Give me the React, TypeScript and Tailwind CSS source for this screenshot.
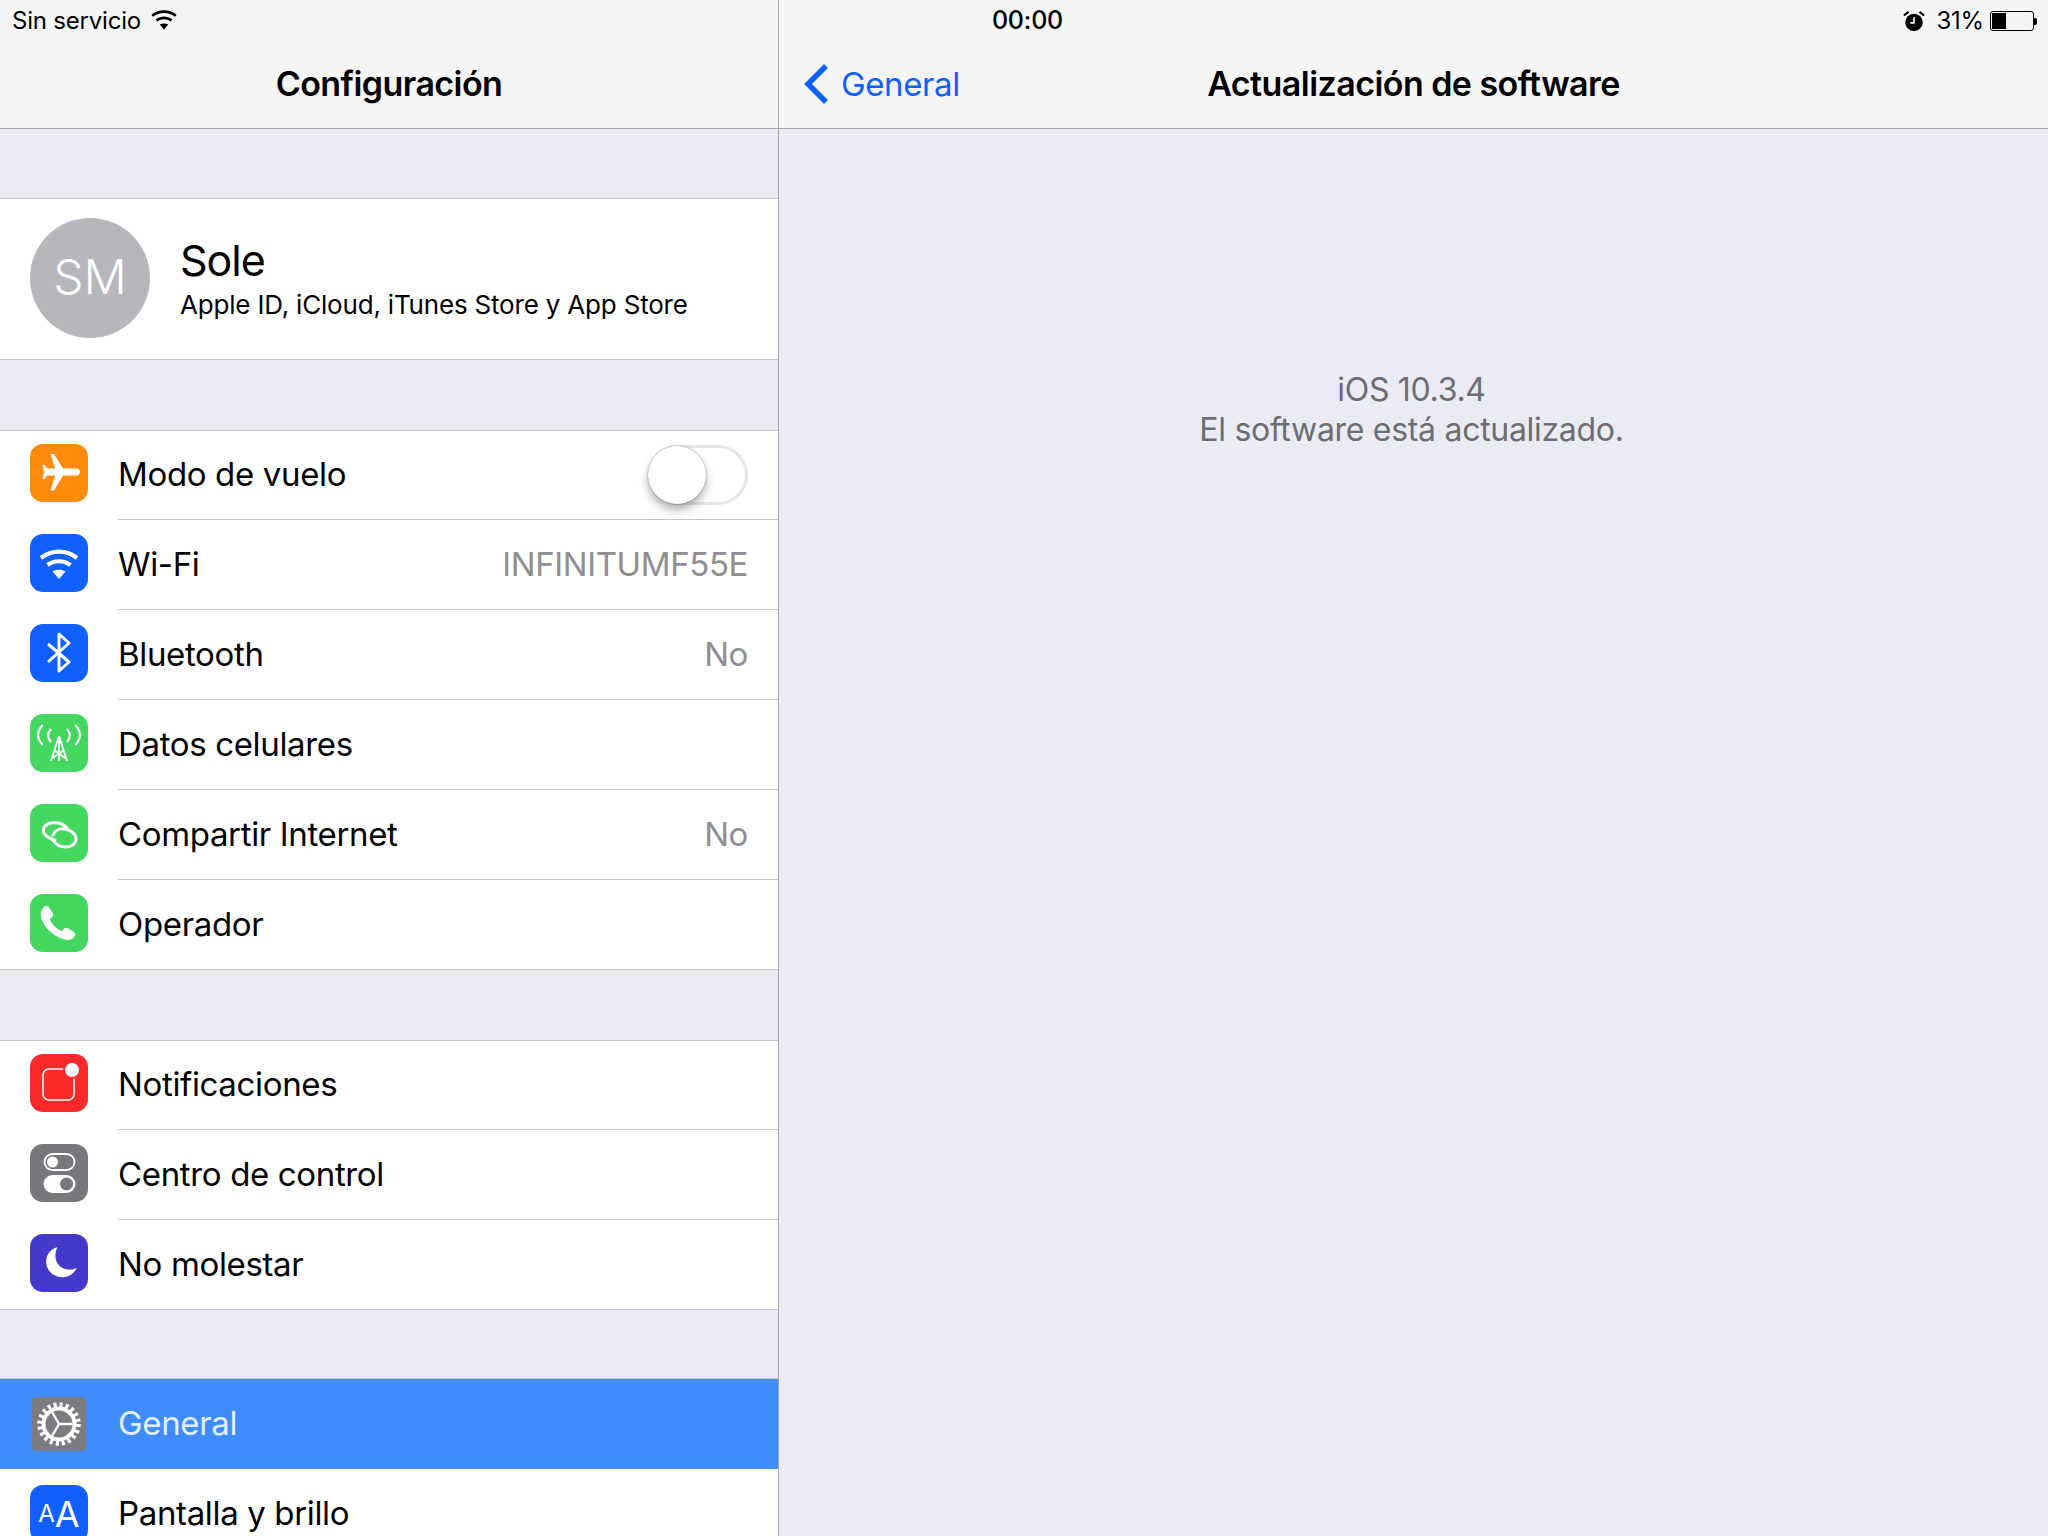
import type { ReactNode } from 'react';

const FONT = "font-['Inter','Liberation_Sans',sans-serif]";

const Airplane = () => (
  <svg viewBox="0 0 58 58" className="size-full">
    <path
      fill="#fff"
      d="M47 24.600c1.500 0 3 1.500 3 3.400s-1.500 3.400-3 3.400H33L24 46.500h-3.500L25 31.400h-7.500L14.500 35h-2L14 28l-1.500-7h2l3 3.600H25L20.500 10H24l9 14.600z"
    />
  </svg>
);

const WifiIcon = ({ color = '#fff' }: { color?: string }) => (
  <svg viewBox="0 0 58 58" className="size-full">
    <g fill="none" stroke={color} strokeWidth="4.200">
      <path d="M11 24c10.500-8.400 25.500-8.400 36 0" />
      <path d="M17.500 31c6.800-5 16.200-5 23 0" />
    </g>
    <path fill={color} d="M22.500 37.500c3.800-2.400 9.200-2.400 13 0L29 45z" />
  </svg>
);

const BluetoothIcon = () => (
  <svg viewBox="0 0 58 58" className="size-full">
    <path
      d="M18 20l21 18-10 9V10l10 9-21 19"
      fill="none"
      stroke="#fff"
      strokeWidth="3"
      strokeLinejoin="round"
    />
  </svg>
);

const CellularIcon = () => (
  <svg viewBox="0 0 58 58" className="size-full" fill="none" stroke="#fff" strokeWidth="2.200">
    <path d="M12.700 11c-6 6.500-6 13.500 0 20M45.300 11c6 6.500 6 13.500 0 20" />
    <path d="M21 15c-4 4.500-4 8.500 0 13M37 15c4 4.500 4 8.500 0 13" />
    <path d="M29 22v25M29 22l-8 25M29 22l8 25M24 36l11 8M34 36l-11 8" strokeWidth="1.800" />
  </svg>
);

const LinkIcon = () => (
  <svg viewBox="0 0 58 58" className="size-full" fill="none" stroke="#fff" strokeWidth="3" strokeLinecap="round">
    <path d="M37 24C33 19 27 18 21 19 15 20 12 25 14 29 16 33 21 35 25 36" />
    <path d="M23 31C25 26 30 24 35 25 41 26 46 30 46 35 46 40 41 43 36 43 31 43 26 41 23 36" />
  </svg>
);

const PhoneIcon = () => (
  <svg viewBox="0 0 58 58" className="size-full">
    <path
      fill="#fff"
      d="M13 14c2-2.300 4-2.800 5.500-1.600l4.300 6.800c.8 1.400.4 2.600-.7 3.700l-2.400 2.200c1.800 5 6.500 9.800 11.800 12l2.400-2.400c1.100-1.100 2.400-1.400 3.700-.6l6.800 4.300c1.400 1 1.100 3.100-.8 5-2.600 2.600-6.200 3.200-10.200 1.900-11.500-3.800-19.800-12.500-22.300-21.700-.8-3.400-.4-6.700 1.900-9.600z"
    />
  </svg>
);

const NotifIcon = () => (
  <svg viewBox="0 0 58 58" className="size-full">
    <rect x="13" y="15" width="31" height="31" rx="6" fill="none" stroke="#fff" strokeWidth="1.600" />
    <circle cx="42" cy="16" r="9" fill="#fb2a2a" />
    <circle cx="42" cy="16" r="7" fill="#fff" />
  </svg>
);

const ControlIcon = () => (
  <svg viewBox="0 0 58 58" className="size-full">
    <rect x="14.500" y="10" width="30" height="16" rx="8" fill="none" stroke="#fff" strokeWidth="1.800" />
    <circle cx="22.500" cy="18" r="5.500" fill="#fff" />
    <rect x="13.500" y="31" width="32" height="18" rx="9" fill="#fff" />
    <circle cx="36.500" cy="40" r="6.500" fill="#77777c" />
  </svg>
);

const MoonIcon = () => (
  <svg viewBox="0 0 58 58" className="size-full">
    <path
      fill="#fff"
      d="M27.500 13c-8.500 2.500-12.600 10-11 18 1.700 8 10 13.500 18.500 12 5-.8 9.500-4 11.700-9-8 3.500-16.300 1-19.700-5.500-2.400-4.700-2-10.500.5-15.500z"
    />
  </svg>
);

const GearIcon = () => (
  <svg viewBox="0 0 54 54" className="size-full">
    <circle cx="27" cy="27" r="19" fill="none" stroke="#fff" strokeWidth="5.500" strokeDasharray="3 2.970" />
    <circle cx="27" cy="27" r="15.500" fill="none" stroke="#fff" strokeWidth="4" />
    <path d="M27 27h13.500M27 27l-7 -12M27 27l-7 12" stroke="#fff" strokeWidth="2.400" fill="none" />
  </svg>
);

const BaseIcon = ({ bg, children }: { bg: string; children: ReactNode }) => (
  <div className={`size-[58px] shrink-0 overflow-hidden rounded-[13px] ${bg}`}>{children}</div>
);

interface RowProps {
  icon: ReactNode;
  label: string;
  value?: string;
  first?: boolean;
  last?: boolean;
  selected?: boolean;
  flat?: boolean;
  right?: ReactNode;
}

const Row = ({ icon, label, value, first, last, selected, flat, right }: RowProps) => {
  const iconShift = flat ? '' : first ? 'mb-[6px]' : last ? 'mb-[3px]' : 'mb-[5px]';

  return (
    <div
      className={`flex items-center pl-[30px] ${!flat && (first || last) ? 'h-[89px]' : 'h-[90px]'} ${
        selected ? 'bg-[#3f8cff]' : 'bg-white'
      }`}
    >
      <div className={`flex w-[58px] shrink-0 justify-center ${iconShift}`}>{icon}</div>
      <div
        className={`ml-[30px] flex h-full min-w-0 flex-1 items-center justify-between pr-[30px] ${
          first ? 'pb-[1px]' : ''
        } ${last ? '' : 'border-b border-[#c8c7cc]'}`}
      >
        <span className={`text-[33px] tracking-[-0.35px] ${selected ? 'text-[#e4efff]' : 'text-black'}`}>{label}</span>
        {value && <span className="text-[33px] tracking-[-0.4px] text-[#8e8e93]">{value}</span>}
        {right}
      </div>
    </div>
  );
};

const Toggle = () => (
  <div className="flex h-[60px] w-[100px] items-center rounded-full border-[3px] border-[#e6e6ea] bg-white">
    <div className="-ml-[3px] size-[58px] rounded-full bg-white shadow-[0_6px_10px_rgba(0,0,0,0.3),0_0_2px_rgba(0,0,0,0.4)]" />
  </div>
);

const Section = ({ children }: { children: ReactNode }) => (
  <div className="border-y border-[#c8c7cc] bg-white">{children}</div>
);

const StatusBar = () => (
  <div className="absolute inset-x-0 top-0 grid h-[40px] grid-cols-[1fr_auto_1fr] items-center pt-[2px] pr-[11px] pl-3 text-[24px] tracking-[-0.2px] text-black">
    <div className="flex items-center gap-1">
      <span>Sin servicio</span>
      <div className="mt-[-4px] size-[38px]">
        <WifiIcon color="#000" />
      </div>
    </div>
    <span className="ml-[6px] text-[25px] font-medium">00:00</span>
    <div className="flex items-center justify-end">
      <svg viewBox="0 0 24 24" className="mr-[11px] size-[22px]">
        <circle cx="12" cy="13.500" r="9.500" fill="#000" />
        <path d="M12 8v6h-4" fill="none" stroke="#fff" strokeWidth="1.800" />
        <path d="M1 6l5-4M23 6l-5-4" stroke="#000" strokeWidth="2.400" />
      </svg>
      <span className="mr-[6px]">31%</span>
      <div className="flex items-center">
        <div className="h-[20px] w-[44px] rounded-[3px] border border-black p-[1px]">
          <div className="h-full w-[14px] bg-black" />
        </div>
        <div className="h-[7px] w-[3px] rounded-r-[2px] bg-black" />
      </div>
    </div>
  </div>
);

const App = () => {
  return (
    <div className={`relative flex h-[1536px] w-[2048px] overflow-hidden bg-[#ebebf3] ${FONT}`}>
      <div className="flex w-[779px] shrink-0 flex-col overflow-hidden border-r border-[#a5a5aa]">
        <div className="flex h-[129px] shrink-0 items-end justify-center border-b border-[#a5a5aa] bg-[#f5f5f5] pb-[19px]">
          <span className="text-[34px] font-[560] tracking-[-0.55px] text-black">Configuración</span>
        </div>
        <div className="h-[69px] shrink-0" />
        <Section>
          <div className="flex h-[160px] items-center pb-[2px] pl-[30px]">
            <div className="flex size-[120px] items-center justify-center rounded-full bg-[#b6b6bc]">
              <span className="mb-[2px] text-[48px] font-light text-white">SM</span>
            </div>
            <div className="mb-[2px] ml-[30px] flex flex-col">
              <span className="text-[43px] leading-[56px] tracking-[-1px] text-black">Sole</span>
              <span className="text-[26px] leading-[34px] tracking-[-0.19px] text-black">
                Apple ID, iCloud, iTunes Store y App Store
              </span>
            </div>
          </div>
        </Section>
        <div className="h-[70px] shrink-0" />
        <Section>
          <Row icon={<BaseIcon bg="bg-[#ff8a0d]"><Airplane /></BaseIcon>} label="Modo de vuelo" right={<Toggle />} first />
          <Row icon={<BaseIcon bg="bg-[#0f60ff]"><WifiIcon /></BaseIcon>} label="Wi-Fi" value="INFINITUMF55E" />
          <Row icon={<BaseIcon bg="bg-[#0f60ff]"><BluetoothIcon /></BaseIcon>} label="Bluetooth" value="No" />
          <Row icon={<BaseIcon bg="bg-[#44d75f]"><CellularIcon /></BaseIcon>} label="Datos celulares" />
          <Row icon={<BaseIcon bg="bg-[#44d75f]"><LinkIcon /></BaseIcon>} label="Compartir Internet" value="No" />
          <Row icon={<BaseIcon bg="bg-[#44d75f]"><PhoneIcon /></BaseIcon>} label="Operador" last />
        </Section>
        <div className="h-[70px] shrink-0" />
        <Section>
          <Row icon={<BaseIcon bg="bg-[#fb2a2a]"><NotifIcon /></BaseIcon>} label="Notificaciones" first />
          <Row icon={<BaseIcon bg="bg-[#77777c]"><ControlIcon /></BaseIcon>} label="Centro de control" />
          <Row icon={<BaseIcon bg="bg-[#4539c9]"><MoonIcon /></BaseIcon>} label="No molestar" last />
        </Section>
        <div className="h-[68px] shrink-0" />
        <Section>
          <Row
            icon={
              <div className="size-[54px] rounded-[4px] bg-[#7b7b82]">
                <GearIcon />
              </div>
            }
            label="General"
            selected
            flat
            last
          />
          <Row
            icon={
              <BaseIcon bg="bg-[#0f60ff]">
                <div className="flex h-full items-center justify-center text-white">
                  <span className="text-[24px] leading-none">A</span>
                  <span className="text-[36px] leading-none">A</span>
                </div>
              </BaseIcon>
            }
            label="Pantalla y brillo"
            flat
          />
        </Section>
      </div>

      <div className="flex min-w-0 flex-1 flex-col">
        <div className="grid h-[129px] shrink-0 grid-cols-[1fr_auto_1fr] items-end border-b border-[#a5a5aa] bg-[#f5f5f5] pb-[19px]">
          <div className="flex items-center pl-[24px] text-[#0f60ff]">
            <svg viewBox="0 0 26 42" className="mr-[12px] h-[42px] w-[26px]">
              <path d="M23 3L5 21l18 18" fill="none" stroke="#0f60ff" strokeWidth="5.500" />
            </svg>
            <span className="text-[33px] tracking-[-0.4px]">General</span>
          </div>
          <span className="text-[34px] font-[560] tracking-[-0.55px] text-black">Actualización de software</span>
          <div />
        </div>
        <div className="flex flex-col items-center pt-[241px] pr-[4px] text-[#6d6d72]">
          <span className="text-[32px] leading-[40px] tracking-[-0.3px]">iOS 10.3.4</span>
          <span className="text-[32px] leading-[40px] tracking-[-0.3px]">El software está actualizado.</span>
        </div>
      </div>

      <StatusBar />
    </div>
  );
};

export default App;
